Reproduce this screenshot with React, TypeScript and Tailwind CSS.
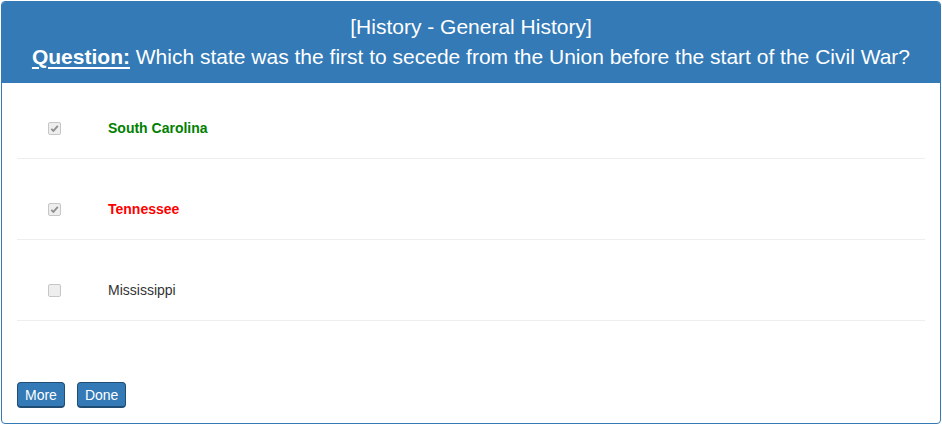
import React from "react";

function Box({ checked }: { checked: boolean }) {
  return (
    <span className="inline-flex h-[13px] w-[13px] items-center justify-center rounded-[2px] border border-[#c6c6c6] bg-[#eeeeee]">
      {checked && (
        <svg width="9" height="9" viewBox="0 0 9 9">
          <path d="M1.3 4.8 L3.4 6.9 L7.8 1.8" fill="none" stroke="#8f8f8f" strokeWidth="1.8" />
        </svg>
      )}
    </span>
  );
}

function Row({ label, color, bold, checked, first }: { label: string; color: string; bold: boolean; checked: boolean; first?: boolean }) {
  return (
    <div className={`flex items-center border-b border-[#eeeeee] pb-[20px] ${first ? "pt-[35px]" : "pt-[40px]"}`}>
      <div className="flex h-[20px] w-[91px] items-center pl-[31px]">
        <Box checked={checked} />
      </div>
      <span className={`text-[14px] leading-[20px] ${bold ? "font-bold" : ""}`} style={{ color }}>
        {label}
      </span>
    </div>
  );
}

export default function App() {
  return (
    <div className="bg-white p-[1px]" style={{ fontFamily: '"Liberation Sans", Arial, sans-serif' }}>
      <div className="flex h-[423px] w-[940px] flex-col rounded-[4px] border border-[#337ab7] bg-white">
        <div className="rounded-t-[3px] bg-[#337ab7] px-[15px] pt-[10px] pb-[11px] text-center text-[21px] leading-[30px] text-white">
          <div>[History - General History]</div>
          <div>
            <span className="font-bold underline underline-offset-[3px]">Question:</span>{" "}
            Which state was the first to secede from the Union before the start of the Civil War?
          </div>
        </div>
        <div className="flex flex-1 flex-col px-[15px]">
          <Row label="South Carolina" color="#008000" bold checked first />
          <Row label="Tennessee" color="#ff0000" bold checked />
          <Row label="Mississippi" color="#333333" bold={false} checked={false} />
          <div className="mt-[61px] flex gap-[12px]">
            <button className="h-[26px] rounded-[4px] border border-[#204d74] border-b-[2px] bg-[#337ab7] px-[7px] text-[14px] leading-[20px] text-white">
              More
            </button>
            <button className="h-[26px] rounded-[4px] border border-[#204d74] border-b-[2px] bg-[#337ab7] px-[7px] text-[14px] leading-[20px] text-white">
              Done
            </button>
          </div>
        </div>
      </div>
    </div>
  );
}
